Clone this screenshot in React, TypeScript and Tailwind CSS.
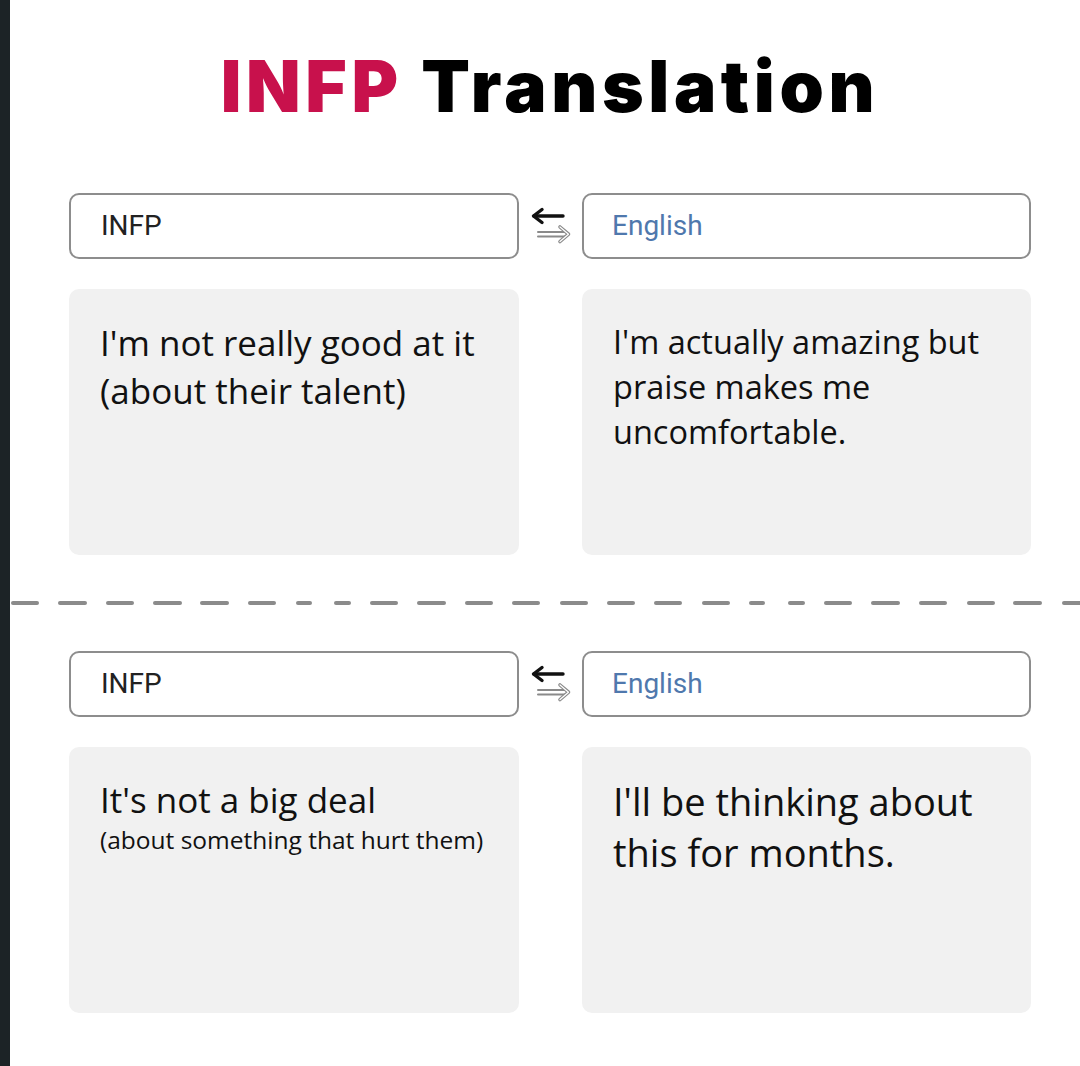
import React from 'react'

const dashes = [
  [1, 28], [48, 29], [96, 28], [143, 29], [190, 29], [238, 28], [286, 16], [324, 17], [360, 28],
  [407, 29], [455, 28], [502, 28], [550, 28], [597, 28], [644, 28], [692, 28], [739, 16], [778, 17],
  [814, 28], [861, 29], [909, 28], [957, 28], [1003, 29], [1052, 28],
]

function SwapIcon() {
  return (
    <svg width="42" height="38" viewBox="0 0 42 38" fill="none">
      <path d="M4 9 H33" stroke="#111" strokeWidth="3.4" strokeLinecap="round" />
      <path d="M12 2.5 L3.5 9 L12 15.5" stroke="#111" strokeWidth="3.4" strokeLinecap="round" strokeLinejoin="round" />
      <path d="M8 25 H35 M8 29.5 H35" stroke="#8a8a8a" strokeWidth="2" strokeLinecap="round" />
      <path d="M30 20 L38.5 27.2 L30 34.5" stroke="#8a8a8a" strokeWidth="3.6" strokeLinecap="round" strokeLinejoin="round" />
      <path d="M30 20 L38.5 27.2 L30 34.5" stroke="#fff" strokeWidth="1.2" strokeLinecap="round" strokeLinejoin="round" />
    </svg>
  )
}

function LangRow() {
  return (
    <div className="grid grid-cols-[450px_63px_449px] items-center">
      <div className="h-[66px] rounded-[10px] border-2 border-[#8d8d8d] flex items-center pl-[30px] text-[28px] text-[#222] font-['Roboto',sans-serif]">
        INFP
      </div>
      <div className="flex justify-center">
        <SwapIcon />
      </div>
      <div className="h-[66px] rounded-[10px] border-2 border-[#8d8d8d] flex items-center pl-[28px] text-[28px] text-[#4f78ad] font-['Roboto',sans-serif]">
        English
      </div>
    </div>
  )
}

function Card({ children }: { children: React.ReactNode }) {
  return (
    <div className="h-[266px] rounded-[10px] bg-[#f1f1f1] px-[31px] pt-[30px] text-[#111] font-['Open_Sans',sans-serif]">
      {children}
    </div>
  )
}

export default function App() {
  return (
    <div className="w-[1080px] h-[1066px] flex overflow-hidden bg-white">
      <div className="w-[10px] bg-[#1c2326]" />
      <div className="flex-1 flex flex-col">
        <h1 className="mt-[44px] pl-[10px] text-center text-[71px] leading-[84px] font-black tracking-[4.6px] font-['Inter',sans-serif] text-black">
          <span className="text-[#c8114c]">INFP</span> Translation
        </h1>

        <div className="pl-[59px] mt-[65px] flex flex-col gap-[30px]">
          <LangRow />
          <div className="grid grid-cols-[450px_449px] gap-x-[63px]">
            <Card>
              <p className="text-[35px] leading-[48px]">I'm not really good at it (about their talent)</p>
            </Card>
            <Card>
              <p className="text-[32.5px] leading-[45px] pr-[20px]">I'm actually amazing but praise makes me uncomfortable.</p>
            </Card>
          </div>
        </div>

        <div className="relative h-[96px]">
          {dashes.map(([x, w], i) => (
            <span
              key={i}
              className="absolute top-[46px] h-[4px] rounded-full bg-[#8b8b8b]"
              style={{ left: x, width: w }}
            />
          ))}
        </div>

        <div className="pl-[59px] flex flex-col gap-[30px]">
          <LangRow />
          <div className="grid grid-cols-[450px_449px] gap-x-[63px]">
            <Card>
              <p className="text-[35px] leading-[46px]">It's not a big deal</p>
              <p className="text-[24.5px] leading-[34px]">(about something that hurt them)</p>
            </Card>
            <Card>
              <p className="text-[38px] leading-[51px] -mt-[1px]">I'll be thinking about this for months.</p>
            </Card>
          </div>
        </div>
      </div>
    </div>
  )
}
